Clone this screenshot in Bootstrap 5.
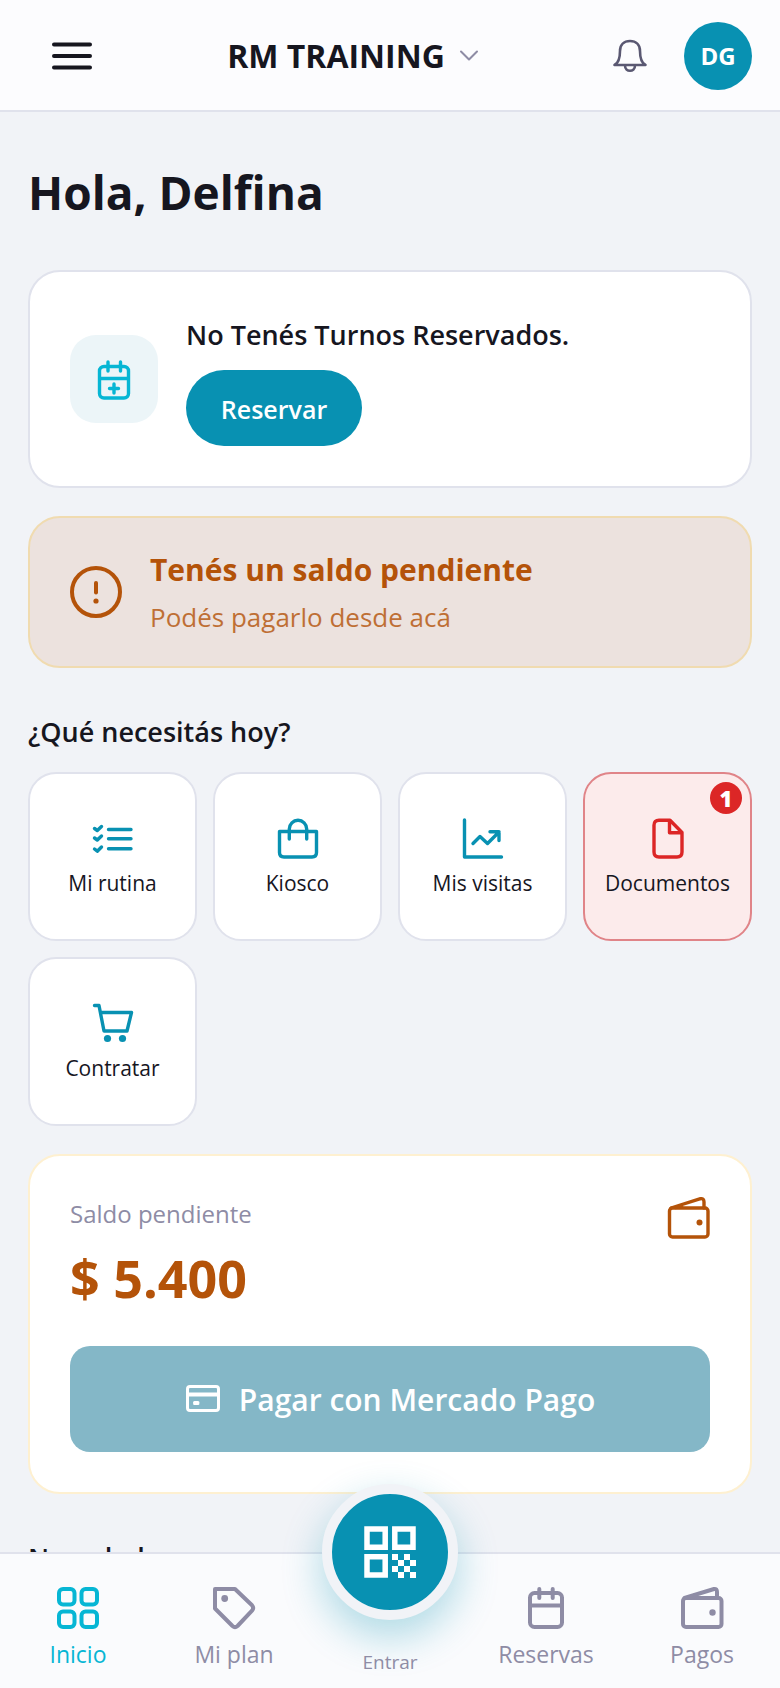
<!DOCTYPE html>
<html lang="es">
<head>
<meta charset="utf-8">
<meta name="viewport" content="width=device-width, initial-scale=1">
<title>RM TRAINING</title>
<link href="https://cdn.jsdelivr.net/npm/bootstrap@5.3.0/dist/css/bootstrap.min.css" rel="stylesheet">
<script src="https://cdn.jsdelivr.net/npm/bootstrap@5.3.0/dist/js/bootstrap.bundle.min.js" defer></script>
<style>
:root { --brand: #0891b2; --accent: #06b6d4; --ink: #16161f; --muted-ink: #8e8ca5; --line: #e0e2ec; --warn: #b45309; --alert-red: #dc2626; --canvas: #f1f3f7; }
body { background: var(--canvas); color: var(--ink); font-family: "Open Sans", "Noto Sans", sans-serif; }
a { color: inherit; text-decoration: none; }
.ico { display: block; flex: none; fill: none; stroke: currentColor; stroke-width: 3.4; stroke-linecap: round; stroke-linejoin: round; width: 44px; height: 44px; }
.ico .dot { fill: currentColor; stroke: none; }
.app-shell { height: 100vh; }
.topbar { height: 112px; padding: 2px 28px 0 48px; background: #fcfcfe; border-bottom: 2px solid var(--line); }
.icon-btn { color: inherit; background: none; border: 0; padding: 0; }
.menu-ico { width: 48px; height: 48px; stroke-width: 4; }
.gym-name { font-size: 32px; line-height: 40px; font-weight: 700; gap: 14px; }
.chevron-ico { width: 20px; height: 20px; stroke-width: 2; color: var(--muted-ink); }
.topbar-end { gap: 34px; }
.bell-ico { width: 40px; height: 40px; stroke-width: 2.6; color: #5a5872; }
.avatar { width: 68px; height: 68px; background: var(--brand); color: #fff; font-size: 24px; font-weight: 700; }
.content { min-height: 0; padding: 44px 28px 0; overflow-y: auto; scrollbar-width: none; }
.greeting { font-size: 46px; line-height: 72px; font-weight: 700; margin: 0 0 42px; }
.panel { background: #fff; border: 2px solid var(--line); border-radius: 32px; padding: 40px; margin-bottom: 28px; gap: 28px; }
.turn-icon { width: 88px; height: 88px; border-radius: 26px; background: #ecf5f8; color: var(--accent); }
.turn-title { font-size: 27px; line-height: 46px; font-weight: 600; margin-bottom: 12px; }
.reserve { background: var(--brand); color: #fff; border: 0; border-radius: 38px; width: 176px; height: 76px; font-size: 25px; font-weight: 600; padding: 4px 0 0; }
.notice { background: #ece2de; border-color: #f0dbb0; color: var(--warn); padding: 27px 40px; margin-bottom: 44px; }
.notice-ico { width: 52px; height: 52px; stroke-width: 4; }
.notice-title { font-size: 30px; line-height: 50px; font-weight: 700; }
.notice-text { font-size: 26px; line-height: 44px; opacity: .8; }
.section-title { font-size: 27px; line-height: 40px; font-weight: 600; margin: 0 0 20px; }
.tiles { display: grid; grid-template-columns: repeat(4, 1fr); gap: 16px; margin-bottom: 28px; }
.tile { aspect-ratio: 1; background: #fff; border: 2px solid var(--line); border-radius: 28px; color: var(--brand); }
.tile span { color: var(--ink); font-size: 21px; line-height: 28px; }
.tile.pending { background: #fcebeb; border-color: #e08488; color: var(--alert-red); }
.tile .count { top: 8px; right: 8px; width: 32px; height: 32px; background: var(--alert-red); color: #fff; font-size: 22px; line-height: 32px; font-weight: 800; }
.due { border-color: #fef0d0; margin-bottom: 44px; }
.due-label { font-size: 24px; line-height: 36px; color: var(--muted-ink); margin-bottom: 10px; }
.due-amount { font-size: 52px; line-height: 72px; font-weight: 700; color: var(--warn); margin-bottom: 32px; }
.due-ico { color: var(--warn); }
.pay { background: #84b7c7; color: #fff; border: 0; border-radius: 20px; height: 106px; font-size: 30px; font-weight: 600; gap: 18px; }
.pay-ico { width: 36px; height: 36px; stroke-width: 3; }
.tabs { height: 136px; background: #fafbfd; border-top: 2px solid var(--line); color: var(--muted-ink); font-size: 23px; line-height: 32px; }
.tabs a { flex: 1 1 0; padding-top: 32px; gap: 8px; }
.tabs .ico { stroke-width: 4; }
.tabs .current { color: var(--accent); }
.tabs .scan-tab { padding-top: 0; gap: 28px; font-size: 19px; line-height: 28px; }
.scan { width: 136px; height: 136px; margin-top: -70px; background: var(--brand); border: 10px solid var(--canvas); color: #fff; box-shadow: 0 16px 40px rgba(8,145,178,.32); }
.tabs .qr-ico { width: 52px; height: 52px; stroke-width: 5.5; stroke-linejoin: miter; }
</style>
</head>
<body>
<div class="app-shell d-flex flex-column overflow-hidden">
  <header class="topbar d-flex align-items-center justify-content-between flex-shrink-0">
    <button class="icon-btn" aria-label="Menú"><svg class="ico menu-ico" viewBox="0 0 48 48"><path d="M6 12.500h36M6 24h36M6 35.500h36"/></svg></button>
    <button class="icon-btn gym-name d-flex align-items-center">RM TRAINING
      <svg class="ico chevron-ico" viewBox="0 0 20 20"><path d="M2 5.500l8 8 8-8"/></svg></button>
    <div class="topbar-end d-flex align-items-center">
      <button class="icon-btn" aria-label="Notificaciones"><svg class="ico bell-ico" viewBox="0 0 40 40"><path d="M4.500 29C8.500 27 10 23 10 15C10 8.500 14 5 20 5S30 8.500 30 15C30 23 31.500 27 35.500 29ZM15 29.500C15 36.500 25 36.500 25 29.500"/></svg></button>
      <a href="#perfil" class="avatar rounded-circle d-flex align-items-center justify-content-center">DG</a>
    </div>
  </header>

  <main class="content flex-grow-1">
    <h1 class="greeting">Hola, Delfina</h1>

    <section class="panel d-flex align-items-center">
      <div class="turn-icon d-flex align-items-center justify-content-center flex-shrink-0">
        <svg class="ico" viewBox="0 0 44 44"><rect x="7.500" y="9.500" width="29" height="31.500" rx="4.500"/><path d="M16 5v9M28.500 5v9M8 21.500h28M22 27v9M17.500 31.500h9"/></svg>
      </div>
      <div>
        <div class="turn-title">No Tenés Turnos Reservados.</div>
        <button class="reserve d-block">Reservar</button>
      </div>
    </section>

    <a href="#pagos" class="panel notice d-flex align-items-center">
      <svg class="ico notice-ico" viewBox="0 0 52 52"><circle cx="26" cy="26" r="24"/><path d="M26 17v9.500"/><circle class="dot" cx="26" cy="35" r="2.600"/></svg>
      <div>
        <div class="notice-title">Tenés un saldo pendiente</div>
        <div class="notice-text">Podés pagarlo desde acá</div>
      </div>
    </a>

    <h2 class="section-title">¿Qué necesitás hoy?</h2>
    <nav class="tiles" aria-label="Accesos">
      <a href="#rutina" class="tile d-flex flex-column align-items-center justify-content-center gap-2">
        <svg class="ico" viewBox="0 0 44 44"><path d="M17.500 12.500H40M17.500 21.700H40M17.500 31.700H40M3.500 11.500L6.300 13.500 10.500 9.500M3.500 21L6.300 23 10.500 19M3.500 32L6.300 34.200 10.500 30"/></svg>
        <span>Mi rutina</span></a>
      <a href="#kiosco" class="tile d-flex flex-column align-items-center justify-content-center gap-2">
        <svg class="ico" viewBox="0 0 44 44"><path d="M3.500 14.500H40.500V35.500Q40.500 40 36 40H8Q3.500 40 3.500 35.500ZM13.300 22V12A8.700 8.700 0 0 1 30.700 12V22"/></svg>
        <span>Kiosco</span></a>
      <a href="#visitas" class="tile d-flex flex-column align-items-center justify-content-center gap-2">
        <svg class="ico" viewBox="0 0 44 44"><path d="M3.500 3V40H40.500M12 26.500L19 19.500 26.500 26.500 38 15M29 14.700H38V23.500"/></svg>
        <span>Mis visitas</span></a>
      <a href="#documentos" class="tile pending position-relative d-flex flex-column align-items-center justify-content-center gap-2">
        <svg class="ico" viewBox="0 0 44 44"><path d="M13 3.200H24L36 15.500V35Q36 40 31 40H13Q8 40 8 35V8.200Q8 3.200 13 3.200ZM23.500 3.500V15.700H35.500"/></svg>
        <span>Documentos</span>
        <b class="count position-absolute rounded-circle text-center">1</b></a>
      <a href="#contratar" class="tile d-flex flex-column align-items-center justify-content-center gap-2">
        <svg class="ico" viewBox="0 0 44 44"><path d="M3.500 3.500H8L13 29H36L40.500 10.500H10"/><circle class="dot" cx="16.500" cy="36.500" r="3.600"/><circle class="dot" cx="31.500" cy="36.500" r="3.600"/></svg>
        <span>Contratar</span></a>
    </nav>

    <section class="panel due">
      <div class="d-flex justify-content-between align-items-start">
        <div>
          <div class="due-label">Saldo pendiente</div>
          <div class="due-amount">$ 5.400</div>
        </div>
        <svg class="ico due-ico" viewBox="0 0 44 44"><rect x="3.500" y="12" width="38.500" height="29" rx="3"/><path d="M5 12L34.500 2.700Q38 2.200 38 6V12M10 11.500L16 9.500"/><circle class="dot" cx="33.500" cy="26.500" r="3"/></svg>
      </div>
      <button class="pay w-100 d-flex align-items-center justify-content-center">
        <svg class="ico pay-ico" viewBox="0 0 36 36"><rect x="2.500" y="5.500" width="31" height="24" rx="2.500"/><path d="M3 14H33M3 13H33M9.500 22.500H13M9.500 21.500H13" /></svg>
        Pagar con Mercado Pago</button>
    </section>

    <h2 class="section-title">Novedades</h2>
  </main>

  <nav class="tabs d-flex flex-shrink-0 position-relative" aria-label="Principal">
    <a href="#inicio" class="current d-flex flex-column align-items-center">
      <svg class="ico" viewBox="0 0 44 44"><rect x="3" y="3" width="15.500" height="15.500" rx="4"/><rect x="25.500" y="3" width="15.500" height="15.500" rx="4"/><rect x="3" y="25.500" width="15.500" height="15.500" rx="4"/><rect x="25.500" y="25.500" width="15.500" height="15.500" rx="4"/></svg>
      Inicio</a>
    <a href="#plan" class="d-flex flex-column align-items-center">
      <svg class="ico" viewBox="0 0 44 44"><path d="M3 3H23L40 19.300Q42.300 22 40 24.700L25.500 40Q23 42.200 20.500 40L3 22.500Z"/><circle class="dot" cx="12.700" cy="12.500" r="3.400"/></svg>
      Mi plan</a>
    <a href="#entrar" class="scan-tab d-flex flex-column align-items-center">
      <div class="scan rounded-circle d-flex align-items-center justify-content-center flex-shrink-0">
        <svg class="ico qr-ico" viewBox="0 0 52 52"><path d="M3 3H21.200V21.200H3ZM30.800 3H49V21.200H30.800ZM3 30.800H21.200V49H3Z"/><path class="dot" d="M28 28h6v6h-6zM40 28h6v6h-6zM34 34h6v6h-6zM46 34h6v6h-6zM28 40h6v6h-6zM40 40h6v6h-6zM34 46h6v6h-6zM46 46h6v6h-6z"/></svg>
      </div>
      Entrar</a>
    <a href="#reservas" class="d-flex flex-column align-items-center">
      <svg class="ico" viewBox="0 0 44 44"><rect x="6" y="7" width="32" height="34" rx="4.500"/><path d="M15.300 3v9M28.700 3v9M6 19.500h32"/></svg>
      Reservas</a>
    <a href="#pagos" class="d-flex flex-column align-items-center">
      <svg class="ico" viewBox="0 0 44 44"><rect x="3" y="12" width="38.500" height="29" rx="3"/><path d="M4.500 12L34 3Q37 2.500 37 6V12M9.500 11.500L16 9.500"/><circle class="dot" cx="32.500" cy="26.500" r="3.200"/></svg>
      Pagos</a>
  </nav>
</div>
</body>
</html>
